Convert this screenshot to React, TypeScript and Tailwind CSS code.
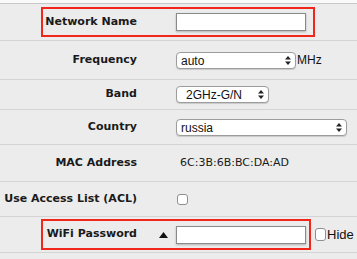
import React from 'react'

const label = "font-['DejaVu_Sans',Verdana,sans-serif] text-[11px] font-bold text-[#1a1a1a] text-right"
const mac = "font-['DejaVu_Sans',Verdana,sans-serif] text-[11px] text-[#1a1a1a]"
const ui = "font-['Liberation_Sans',Arial,sans-serif] text-[12px] text-[#111]"

function Arrows() {
  return (
    <svg width="6" height="9" viewBox="0 0 6 9" className="shrink-0">
      <path d="M3 0 L6 3.5 L0 3.5 Z" fill="#222" />
      <path d="M3 9 L6 5.5 L0 5.5 Z" fill="#222" />
    </svg>
  )
}

function Select({ value, width, pad = 'pl-[4px]' }: { value: string; width: string; pad?: string }) {
  return (
    <div
      className={`${width} h-[17px] flex items-center justify-between ${pad} pr-[4px] bg-white rounded-[4px] border border-[#9c9c9c] shadow-[0_1px_1px_rgba(0,0,0,0.15)] ${ui}`}
    >
      <span className="leading-none pt-[1px]">{value}</span>
      <Arrows />
    </div>
  )
}

function TextBox() {
  return (
    <div className="w-[130px] h-[18px] bg-white border border-[#8a8a8a] shadow-[0_1px_2px_rgba(0,0,0,0.25)]" />
  )
}

function Checkbox() {
  return <div className="w-[11px] h-[11px] bg-white rounded-[3px] border border-[#8f8f8f]" />
}

function Row({ h, name, children }: { h: string; name: string; children: React.ReactNode }) {
  return (
    <div className={`${h} flex items-center border-b border-[#d4d4d4]`}>
      <div className={`w-[137px] ${label}`}>{name}</div>
      <div className="ml-[39px] flex items-center">{children}</div>
    </div>
  )
}

export default function App() {
  return (
    <div className="w-[357px] h-[259px] bg-[#ececec] overflow-hidden">
      <div className="h-[4px] bg-[#fafafa] border-b border-[#c8c8c8]" />

      {/* Network Name */}
      <div className="h-[37px] flex items-center border-b border-[#d4d4d4]">
        <div className="ml-[41px] h-[30px] flex items-center border-2 border-[#f2271b] pr-[7px]">
          <div className={`w-[94px] ${label}`}>Network Name</div>
          <div className="ml-[39px]">
            <TextBox />
          </div>
        </div>
      </div>

      <Row h="h-[39px]" name="Frequency">
        <Select value="auto" width="w-[120px]" />
        <span className={`ml-[1px] ${ui}`}>MHz</span>
      </Row>

      <Row h="h-[30px]" name="Band">
        <Select value="2GHz-G/N" width="w-[93px]" pad="pl-[9px]" />
      </Row>

      <Row h="h-[35px]" name="Country">
        <Select value="russia" width="w-[171px]" />
      </Row>

      <Row h="h-[37px]" name="MAC Address">
        <span className={`ml-[4px] ${mac}`}>6C:3B:6B:BC:DA:AD</span>
      </Row>

      <Row h="h-[35px]" name="Use Access List (ACL)">
        <div className="ml-[1px]">
          <Checkbox />
        </div>
      </Row>

      {/* WiFi Password */}
      <div className="h-[36px] flex items-center border-b border-[#d4d4d4]">
        <div className="ml-[41px] h-[31px] flex items-center border-2 border-[#f2271b] pr-[3px]">
          <div className={`w-[94px] ${label}`}>WiFi Password</div>
          <svg width="9" height="6" viewBox="0 0 9 6" className="ml-[22px]">
            <path d="M4.5 0 L9 6 L0 6 Z" fill="#111" />
          </svg>
          <div className="ml-[8px]">
            <TextBox />
          </div>
        </div>
        <div className="ml-[4px] flex items-center">
          <div className="w-[11px] h-[13px] bg-white rounded-[3px] border border-[#8f8f8f]" />
          <span className={`ml-[1px] ${ui} text-[13px]`}>Hide</span>
        </div>
      </div>
    </div>
  )
}
